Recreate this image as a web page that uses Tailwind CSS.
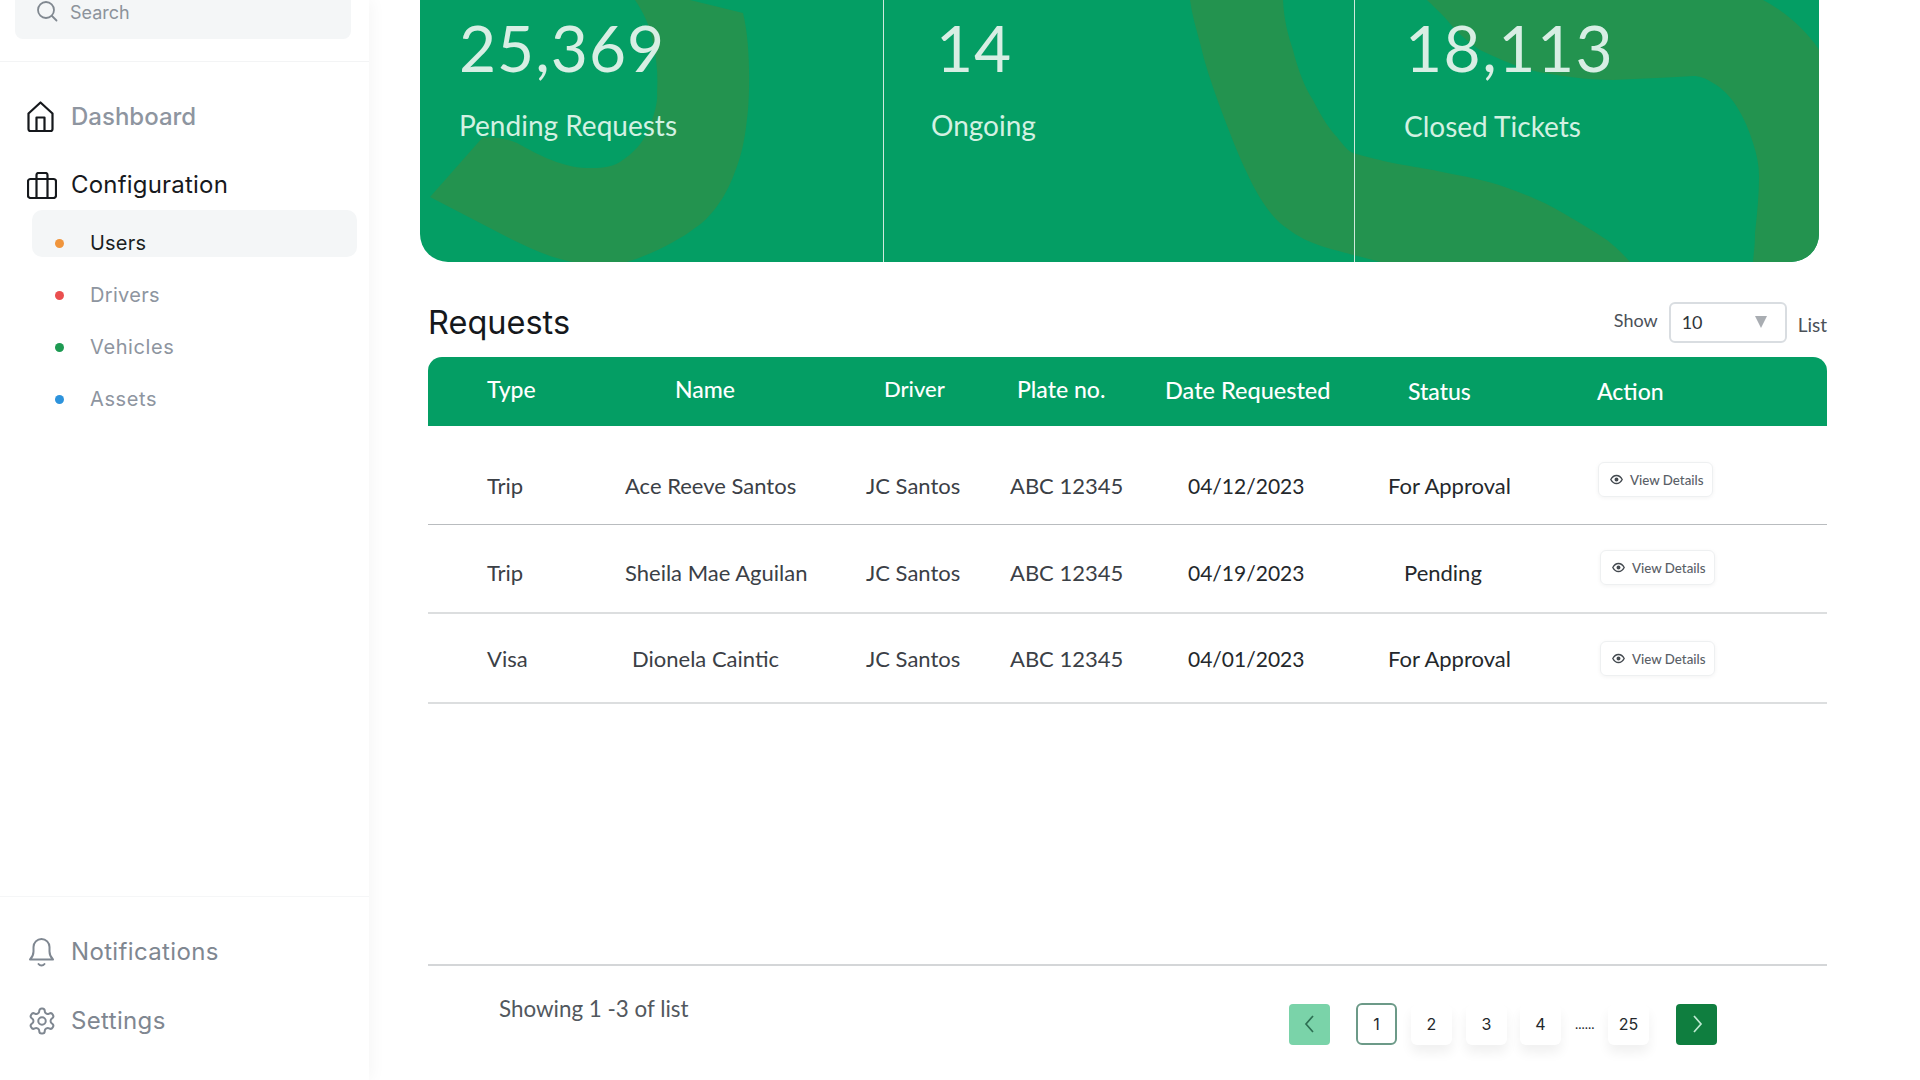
<!DOCTYPE html>
<html lang="en">
<head>
<meta charset="utf-8">
<title>Requests</title>
<script src="https://cdn.jsdelivr.net/npm/@tailwindcss/browser@4"></script>
</head>
<body class="bg-white font-['Lato',sans-serif]">
<div class="flex w-[1920px] h-[1080px] overflow-hidden bg-white">
  <!-- Sidebar -->
  <aside class="w-[369px] shrink-0 h-full flex flex-col bg-white shadow-[4px_0_14px_rgba(0,0,0,0.035)] z-10 font-['Inter',sans-serif]">
    <div class="h-[62px] shrink-0 border-b border-[#f3f4f5] pl-[15px]">
      <div class="w-[336px] h-[39px] bg-[#f4f6f7] rounded-b-[8px] flex items-start pl-[21px] gap-[12px] pt-0">
        <svg class="w-[22px] h-[22px] text-[#808890]" viewBox="0 0 22 22" fill="none" stroke="currentColor" stroke-width="1.8" stroke-linecap="round"><circle cx="10" cy="10" r="8"/><path d="M16 16l4.5 4.5"/></svg>
        <span class="text-[18px] leading-[25px] text-[#8c939b]">Search</span>
      </div>
    </div>
    <div class="flex-1 pt-[35px]">
      <div class="h-[40px] flex items-center pl-[27px] gap-[17px]">
        <svg class="w-[27px] h-[32px] text-[#15181c]" viewBox="0 0 27 32" fill="none" stroke="currentColor" stroke-width="2.2" stroke-linejoin="round"><path d="M1.5 12.500L13.500 1.500l12 11V28a2 2 0 0 1-2 2h-20a2 2 0 0 1-2-2z"/><path d="M9.500 30V16.500h8V30"/></svg>
        <span class="text-[24px] font-medium text-[#8e95a0]">Dashboard</span>
      </div>
      <div class="h-[40px] mt-[28px] flex items-center pl-[27px] gap-[14px]">
        <svg class="w-[30px] h-[27px] text-[#15181c]" viewBox="0 0 30 27" fill="none" stroke="currentColor" stroke-width="2.2" stroke-linejoin="round"><rect x="1" y="7" width="28" height="19" rx="2.500"/><path d="M9.500 7V3a2 2 0 0 1 2-2h7a2 2 0 0 1 2 2v4M9.500 7v19M20.500 7v19"/></svg>
        <span class="text-[24px] text-[#17191d] tracking-[0.2px]">Configuration</span>
      </div>
      <div class="ml-[32px] mt-[5px] w-[325px] h-[47px] bg-[#f4f6f7] rounded-[10px] flex items-center pt-[19px] pl-[23px] gap-[26px]">
        <span class="w-[9px] h-[9px] rounded-full bg-[#f0953c]"></span>
        <span class="text-[20px] text-[#1b1e22] tracking-[0.2px]">Users</span>
      </div>
      <div class="mt-[12px] h-[52px] flex items-center pl-[55px] gap-[26px]">
        <span class="w-[9px] h-[9px] rounded-full bg-[#ea4f4f]"></span>
        <span class="text-[20px] text-[#8e95a0] tracking-[0.3px]">Drivers</span>
      </div>
      <div class="h-[52px] flex items-center pl-[55px] gap-[26px]">
        <span class="w-[9px] h-[9px] rounded-full bg-[#1d9a52]"></span>
        <span class="text-[20px] text-[#8e95a0] tracking-[0.6px]">Vehicles</span>
      </div>
      <div class="h-[52px] flex items-center pl-[55px] gap-[26px]">
        <span class="w-[9px] h-[9px] rounded-full bg-[#2d93dc]"></span>
        <span class="text-[20px] text-[#8e95a0] tracking-[0.6px]">Assets</span>
      </div>
    </div>
    <div class="h-[184px] shrink-0 border-t border-[#f5f6f7] pt-[35px]">
      <div class="h-[40px] flex items-center pl-[28px] gap-[16px]">
        <svg class="w-[27px] h-[30px] text-[#7f8791]" viewBox="0 0 27 30" fill="none" stroke="currentColor" stroke-width="2" stroke-linecap="round" stroke-linejoin="round"><path d="M2 22.500c2-2 3.500-3.500 3.500-8V10a8 8 0 0 1 16 0v4.500c0 4.500 1.500 6 3.500 8z"/><path d="M10.500 27c1.500 2 4.500 2 6 0"/></svg>
        <span class="text-[24px] text-[#7f8791] tracking-[0.35px]">Notifications</span>
      </div>
      <div class="h-[40px] mt-[29px] flex items-center pl-[27px] gap-[14px]">
        <svg class="w-[30px] h-[30px] text-[#7f8791]" viewBox="0 0 24 24" fill="none" stroke="currentColor" stroke-width="1.6" stroke-linecap="round" stroke-linejoin="round"><path d="M12.220 2h-.44a2 2 0 0 0-2 2v.18a2 2 0 0 1-1 1.730l-.43.25a2 2 0 0 1-2 0l-.15-.08a2 2 0 0 0-2.730.73l-.22.38a2 2 0 0 0 .73 2.730l.15.1a2 2 0 0 1 1 1.720v.51a2 2 0 0 1-1 1.740l-.15.09a2 2 0 0 0-.73 2.730l.22.38a2 2 0 0 0 2.730.73l.15-.08a2 2 0 0 1 2 0l.43.25a2 2 0 0 1 1 1.730V20a2 2 0 0 0 2 2h.44a2 2 0 0 0 2-2v-.18a2 2 0 0 1 1-1.730l.43-.25a2 2 0 0 1 2 0l.15.08a2 2 0 0 0 2.730-.73l.22-.39a2 2 0 0 0-.73-2.730l-.15-.08a2 2 0 0 1-1-1.740v-.5a2 2 0 0 1 1-1.740l.15-.09a2 2 0 0 0 .73-2.730l-.22-.38a2 2 0 0 0-2.730-.73l-.15.08a2 2 0 0 1-2 0l-.43-.25a2 2 0 0 1-1-1.730V4a2 2 0 0 0-2-2z"/><circle cx="12" cy="12" r="3"/></svg>
        <span class="text-[24px] text-[#7f8791] tracking-[0.35px]">Settings</span>
      </div>
    </div>
  </aside>

  <!-- Main -->
  <main class="flex-1 h-full flex flex-col pl-[60px] relative">
    <!-- Banner -->
    <section class="relative -ml-[9px] w-[1399px] h-[262px] shrink-0 rounded-b-[28px] overflow-hidden bg-[#049e64] grid grid-cols-[464px_471px_464px] text-[#d8eee4]">
      <svg class="absolute inset-0 w-[1399px] h-[262px]" viewBox="420 0 1399 262" fill="#23934f">
        <path d="M635 0L690 0L743 13C750 40 750 85 748 110C745 140 742 155 733 177C722 205 705 222 695 228C680 240 650 255 627 262L573 262C550 258 530 248 513 240L430 197L483 137C495 137 505 138 517 143C530 150 560 168 587 168C600 168 610 168 620 162C635 152 642 143 647 133C655 115 658 100 657 93C658 75 657 60 653 43C650 25 642 10 635 0Z"/>
        <path d="M1190 0H1283C1284 20 1288 35 1293 50C1298 70 1305 88 1313 100C1322 118 1330 130 1337 137C1343 145 1348 151 1353 153C1370 158 1380 160 1393 163C1420 168 1435 170 1447 173C1475 178 1495 183 1513 190C1535 198 1550 205 1563 213C1580 223 1595 232 1607 240C1617 248 1625 256 1630 262H1380C1370 259 1362 257 1353 255C1340 251 1325 248 1313 243C1300 238 1290 231 1280 223C1268 212 1257 195 1247 173C1238 155 1228 128 1220 107C1212 85 1205 65 1200 43C1196 28 1192 15 1190 0Z"/>
        <path d="M1427 0H1763C1778 8 1790 17 1800 27C1808 35 1815 43 1819 50V262H1753C1754 250 1755 245 1755 233C1757 215 1759 195 1759 177C1759 165 1757 155 1753 143C1749 130 1744 118 1737 107C1730 96 1722 88 1713 83C1705 78 1700 76 1693 76C1675 77 1640 79 1613 80C1590 80 1555 76 1530 70C1512 65 1495 57 1480 50C1465 40 1455 30 1447 20C1440 12 1432 5 1427 0Z"/>
      </svg>
      <div class="relative border-r border-[#cfe9dc] pl-[39px] pt-[12px]">
        <div class="text-[64px] leading-[72px] tracking-[1px]">25,369</div>
        <div class="text-[28px] leading-[32px] mt-[25px] text-[#d3f1e2]">Pending Requests</div>
      </div>
      <div class="relative border-r border-[#cfe9dc] pl-[47px] pt-[12px]">
        <div class="text-[64px] leading-[72px] tracking-[1px] pl-[5px]">14</div>
        <div class="text-[28px] leading-[32px] mt-[25px] text-[#d3f1e2]">Ongoing</div>
      </div>
      <div class="relative pl-[49px] pt-[12px]">
        <div class="text-[64px] leading-[72px] tracking-[1.5px] pl-[1px]">18,113</div>
        <div class="text-[28px] leading-[32px] mt-[26px] text-[#d3f1e2]">Closed Tickets</div>
      </div>
    </section>

    <!-- Heading row -->
    <div class="w-[1399px] -ml-px h-[95px] shrink-0 flex items-start pt-[39px] relative">
      <h1 class="text-[32.500px] leading-[44px] text-[#15181c] font-normal font-['Inter',sans-serif]">Requests</h1>
      <div class="ml-auto flex items-start gap-[10px] text-[18px] text-[#4b5158]">
        <span class="leading-[40px] -mt-[1px] mr-px">Show</span>
        <div class="w-[118px] h-[41px] mt-px border-2 border-[#d9dde1] rounded-[6px] flex items-center pl-[11px] pr-[18px] justify-between text-[#30353a]">
          <span>10</span>
          <span class="w-0 h-0 border-l-[6px] border-r-[6px] border-t-[12px] border-l-transparent border-r-transparent border-t-[#a9adb2] -mt-[2px]"></span>
        </div>
        <span class="text-[19px] leading-[47px] ml-[1px]">List</span>
      </div>
    </div>

    <!-- Table -->
    <div class="w-[1399px] shrink-0 -ml-px">
      <div class="h-[69px] bg-[#049e64] rounded-t-[14px] grid grid-cols-[197px_241px_144px_156px_222px_209px_230px] text-white text-[23px] font-medium leading-[28px]">
        <div class="pl-[59px] pt-[18px]">Type</div>
        <div class="pl-[50px] pt-[18px]">Name</div>
        <div class="pl-[18px] pt-[18px] text-[22px]">Driver</div>
        <div class="pl-[7px] pt-[18px]">Plate no.</div>
        <div class="-ml-px pt-[19px] text-[23.5px]">Date Requested</div>
        <div class="pl-[20px] pt-[20px]">Status</div>
        <div class="pt-[20px]">Action</div>
      </div>
      <div class="h-[99px] border-b border-[#b9bcbf] grid grid-cols-[197px_241px_144px_156px_222px_209px_230px] text-[22px] leading-[28px] text-[#3b4046]">
        <div class="pl-[59px] pt-[46px]">Trip</div>
        <div class="pt-[46px]">Ace Reeve Santos</div>
        <div class="pt-[46px]">JC Santos</div>
        <div class="pt-[46px]">ABC 12345</div>
        <div class="pl-[22px] pt-[46px] text-[21px] text-[#24282c]">04/12/2023</div>
        <div class="pt-[46px] text-[#24282c]">For Approval</div>
        <div class="pt-[36px] pl-px"><a class="inline-flex items-center gap-[7px] w-[115px] h-[35px] pl-[11px] border border-[#eef0f1] rounded-[6px] shadow-[0_1px_4px_rgba(0,0,0,0.05)] text-[13.300px] font-medium text-[#5a6067]"><svg class="w-[13px] h-[13px] text-[#43494f]" viewBox="0 0 16 16" fill="none" stroke="currentColor" stroke-width="1.700"><path d="M1 8s2.600-5 7-5 7 5 7 5-2.600 5-7 5-7-5-7-5z"/><circle cx="8" cy="8" r="1.600" fill="currentColor"/></svg>View Details</a></div>
      </div>
      <div class="h-[89px] border-b-2 border-[#dcdedf] grid grid-cols-[197px_241px_144px_156px_222px_209px_230px] text-[22px] leading-[28px] text-[#3b4046]">
        <div class="pl-[59px] pt-[34px]">Trip</div>
        <div class="pt-[34px]">Sheila Mae Aguilan</div>
        <div class="pt-[34px]">JC Santos</div>
        <div class="pt-[34px]">ABC 12345</div>
        <div class="pl-[22px] pt-[34px] text-[21px] text-[#24282c]">04/19/2023</div>
        <div class="pl-[16px] pt-[34px] text-[#24282c]">Pending</div>
        <div class="pt-[25px] pl-[3px]"><a class="inline-flex items-center gap-[7px] w-[115px] h-[35px] pl-[11px] border border-[#eef0f1] rounded-[6px] shadow-[0_1px_4px_rgba(0,0,0,0.05)] text-[13.300px] font-medium text-[#5a6067]"><svg class="w-[13px] h-[13px] text-[#43494f]" viewBox="0 0 16 16" fill="none" stroke="currentColor" stroke-width="1.700"><path d="M1 8s2.600-5 7-5 7 5 7 5-2.600 5-7 5-7-5-7-5z"/><circle cx="8" cy="8" r="1.600" fill="currentColor"/></svg>View Details</a></div>
      </div>
      <div class="h-[90px] border-b-2 border-[#dcdedf] grid grid-cols-[197px_241px_144px_156px_222px_209px_230px] text-[22px] leading-[28px] text-[#3b4046]">
        <div class="pl-[59px] pt-[31px]">Visa</div>
        <div class="pl-[7px] pt-[31px]">Dionela Caintic</div>
        <div class="pt-[31px]">JC Santos</div>
        <div class="pt-[31px]">ABC 12345</div>
        <div class="pl-[22px] pt-[31px] text-[21px] text-[#24282c]">04/01/2023</div>
        <div class="pt-[31px] text-[#24282c]">For Approval</div>
        <div class="pt-[27px] pl-[3px]"><a class="inline-flex items-center gap-[7px] w-[115px] h-[35px] pl-[11px] border border-[#eef0f1] rounded-[6px] shadow-[0_1px_4px_rgba(0,0,0,0.05)] text-[13.300px] font-medium text-[#5a6067]"><svg class="w-[13px] h-[13px] text-[#43494f]" viewBox="0 0 16 16" fill="none" stroke="currentColor" stroke-width="1.700"><path d="M1 8s2.600-5 7-5 7 5 7 5-2.600 5-7 5-7-5-7-5z"/><circle cx="8" cy="8" r="1.600" fill="currentColor"/></svg>View Details</a></div>
      </div>
    </div>

    <!-- Footer -->
    <div class="w-[1399px] -ml-px mt-[260px] border-t-2 border-[#d4d6d8] flex items-start">
      <div class="pl-[71px] pt-[29px] text-[22.400px] leading-[28px] text-[#52585e]">Showing 1 -3 of list</div>
      <div class="ml-auto mr-[110px] mt-[37px] flex items-center text-[16px] text-[#24282c] font-['Inter',sans-serif]">
        <button class="w-[41px] h-[41px] rounded-[4px] bg-[#7ad3a9] flex items-center justify-center text-[#2d6f53]"><svg class="w-[22px] h-[22px]" viewBox="0 0 22 22" fill="none" stroke="currentColor" stroke-width="1.700"><path d="M14 3l-7 8 7 8"/></svg></button>
        <button class="ml-[26px] w-[41px] h-[42px] rounded-[6px] border-2 border-[#6c9a88] bg-white">1</button>
        <button class="ml-[14px] w-[41px] h-[41px] rounded-[6px] bg-white shadow-[0_8px_12px_rgba(0,0,0,0.06)]">2</button>
        <button class="ml-[14px] w-[41px] h-[41px] rounded-[6px] bg-white shadow-[0_8px_12px_rgba(0,0,0,0.06)]">3</button>
        <button class="ml-[13px] w-[41px] h-[41px] rounded-[6px] bg-white shadow-[0_8px_12px_rgba(0,0,0,0.06)]">4</button>
        <span class="ml-[13px] w-[21px] text-center text-[13px] leading-none tracking-[-0.5px]">......</span>
        <button class="ml-[13px] w-[41px] h-[41px] rounded-[6px] bg-white shadow-[0_8px_12px_rgba(0,0,0,0.06)]">25</button>
        <button class="ml-[27px] w-[41px] h-[41px] rounded-[4px] bg-[#0f7e3f] flex items-center justify-center text-[#bfe9d2]"><svg class="w-[22px] h-[22px]" viewBox="0 0 22 22" fill="none" stroke="currentColor" stroke-width="1.700"><path d="M8 3l7 8-7 8"/></svg></button>
      </div>
    </div>
  </main>
</div>
</body>
</html>
